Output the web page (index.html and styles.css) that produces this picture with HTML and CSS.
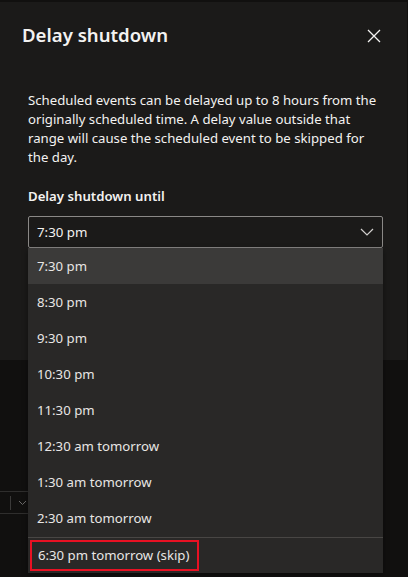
FILE: index.html
```html
<!DOCTYPE html>
<html lang="en">
<head>
<meta charset="utf-8">
<title>Delay shutdown</title>
<link rel="stylesheet" href="styles.css">
</head>
<body>
<div class="dialog">
 <div class="dialog-head">
  <h1>Delay shutdown</h1>
  <span class="close" aria-label="Close">
   <svg width="14" height="14" viewBox="0 0 14 14"><path d="M1 1 L13 13 M13 1 L1 13" stroke="#f3f2f1" stroke-width="1.3" fill="none"/></svg>
  </span>
 </div>
 <div class="dialog-body">
  <p class="note">Scheduled events can be delayed up to 8 hours from the originally scheduled time. A delay value outside that range will cause the scheduled event to be skipped for the day.</p>
  <label class="field-label">Delay shutdown until</label>
  <div class="select">
   <span>7:30 pm</span>
   <svg width="14" height="8" viewBox="0 0 14 8"><path d="M1 1 L7 7 L13 1" stroke="#d2d0ce" stroke-width="1.2" fill="none"/></svg>
  </div>
 </div>
</div>

<div class="behind">
 <div class="behind-select">
  <span class="divider"></span>
  <svg width="9" height="6" viewBox="0 0 9 6"><path d="M1 1 L4.5 4.5 L8 1" stroke="#6b6a69" stroke-width="1" fill="none"/></svg>
 </div>
</div>

<ul class="options">
 <li class="current">7:30 pm</li>
 <li>8:30 pm</li>
 <li>9:30 pm</li>
 <li>10:30 pm</li>
 <li>11:30 pm</li>
 <li>12:30 am tomorrow</li>
 <li>1:30 am tomorrow</li>
 <li>2:30 am tomorrow</li>
 <li class="skip"><span class="mark">6:30 pm tomorrow (skip)</span></li>
</ul>
</body>
</html>
```

FILE: styles.css
```css
body{
 margin:0;
 width:408px;
 height:577px;
 overflow:hidden;
 background:#11100f;
 font-family:"Noto Sans","Open Sans",sans-serif;
 color:#f3f2f1;
}
.dialog{
 margin:2px 1px 0 0;
 height:358px;
 background:#1b1a19;
}
.dialog-head{
 display:flex;
 justify-content:space-between;
 align-items:center;
 padding:20px 26px 0 22px;
}
.dialog-head h1{
 margin:0;
 font-size:18.6px;
 font-weight:600;
 line-height:26px;
}
.close{
 display:flex;
 padding-top:1px;
}
.dialog-body{
 padding:43px 24px 0 28px;
}
.note{
 margin:0;
 font-size:13.2px;
 line-height:19px;
}
.field-label{
 display:block;
 margin-top:20px;
 font-size:13.2px;
 font-weight:600;
 line-height:19px;
}
.select{
 margin-top:10px;
 height:30px;
 border:1px solid #8a8886;
 border-radius:2px;
 display:flex;
 align-items:center;
 justify-content:space-between;
 padding:0 8px 0 8px;
 font-size:13.3px;
}
.behind{
 padding-top:131px;
}
.behind-select{
 height:21px;
 width:40px;
 border-top:1px solid #2f2e2d;
 border-bottom:1px solid #2f2e2d;
 display:flex;
 align-items:center;
 gap:7px;
 padding-left:10px;
}
.divider{
 width:1px;
 height:14px;
 background:#3b3a39;
}
.options{
 position:absolute;
 top:248px;
 left:28px;
 width:355px;
 margin:0;
 padding:0;
 list-style:none;
 background:#292827;
 box-shadow:0 2px 6px rgba(0,0,0,.4);
}
.options li{
 height:36px;
 line-height:36px;
 padding-left:9px;
 font-size:13.2px;
 color:#e8e6e4;
}
.options li.current{
 background:#3b3a39;
}
.options li.skip{
 margin-top:1px;
 border-top:1px solid #484644;
 height:35px;
 line-height:35px;
 padding-left:2px;
}
.mark{
 display:inline-block;
 height:27px;
 line-height:27px;
 padding:0 8px 0 6px;
 border:2px solid #e81123;
}
```
